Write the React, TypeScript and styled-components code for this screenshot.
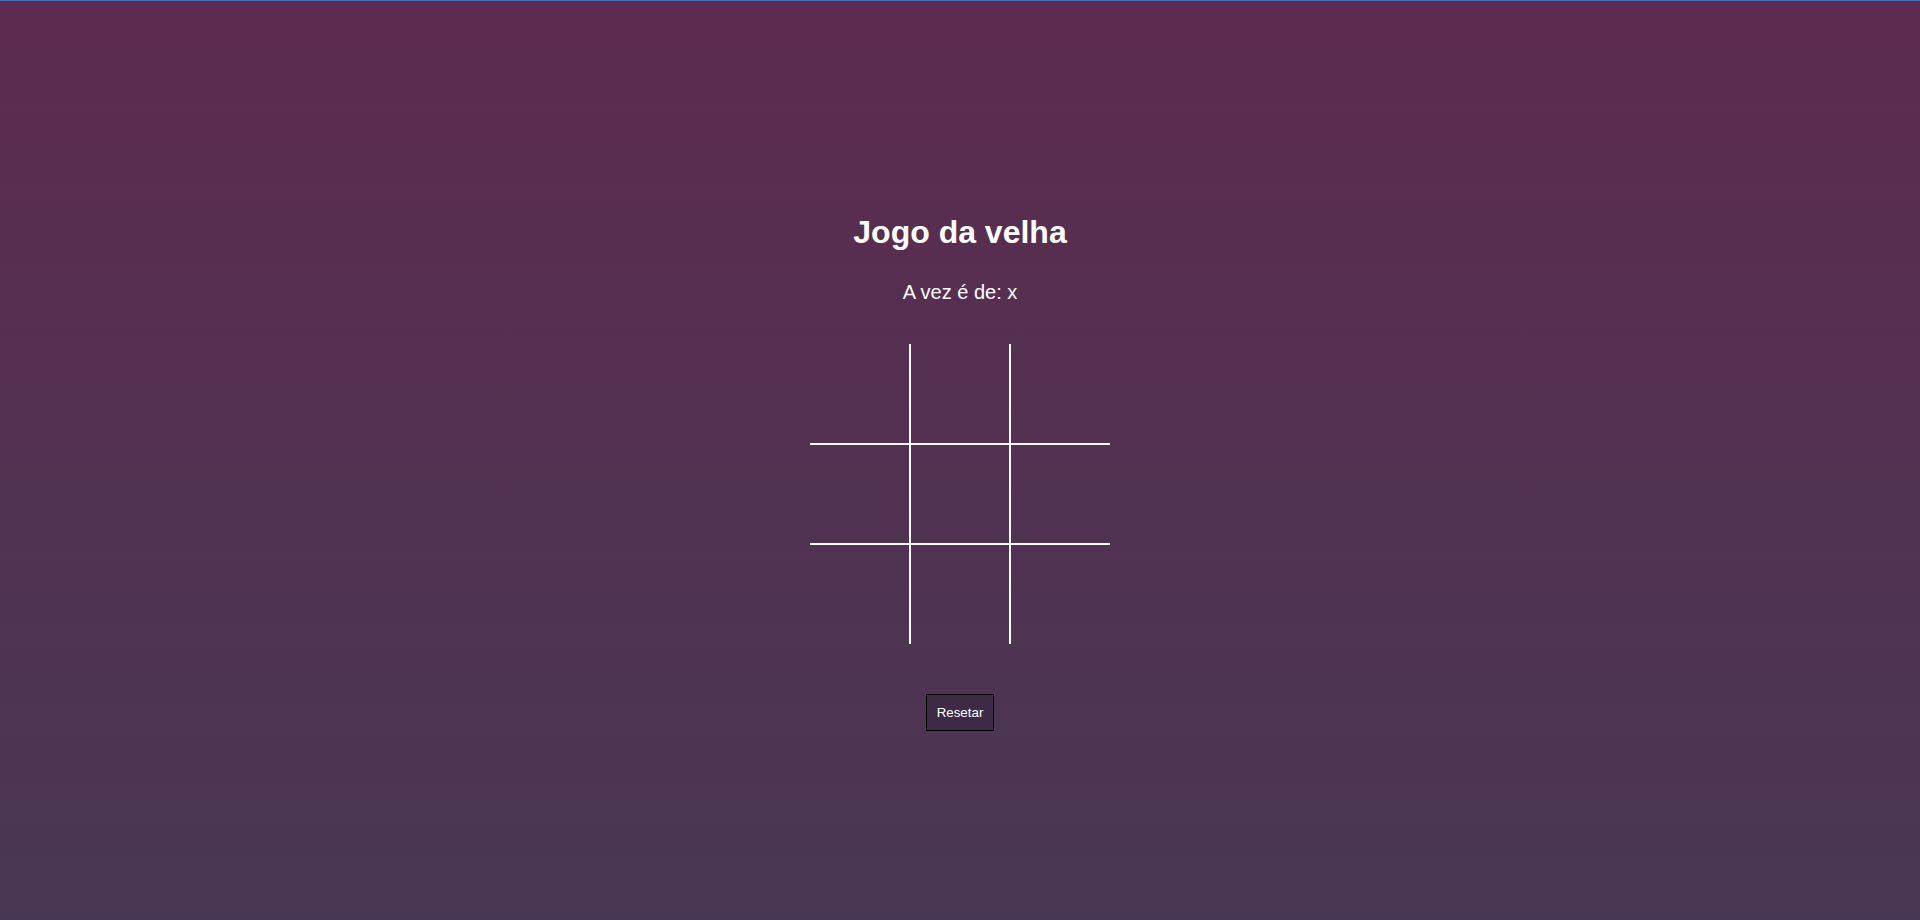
import React, { useState } from "react";
import styled, { createGlobalStyle } from "styled-components";

const GlobalStyle = createGlobalStyle`
  html, body {
    margin: 0;
    padding: 0;
    height: 100%;
  }
  body {
    font-family: "Liberation Sans", Arial, sans-serif;
    background: linear-gradient(180deg, #5d2b4f 0%, #483754 100%);
    color: #ffffff;
  }
`;

const TopLine = styled.div`
  height: 1px;
  background: #3b74b8;
`;

const Page = styled.main`
  min-height: 919px;
  box-sizing: border-box;
  display: flex;
  flex-direction: column;
  align-items: center;
  padding-top: 213px;
`;

const Title = styled.h1`
  margin: 0;
  font-size: 32px;
  font-weight: 700;
  line-height: 37px;
`;

const Turn = styled.p`
  margin: 30px 0 0;
  font-size: 20px;
  line-height: 23px;
`;

const Board = styled.div`
  margin-top: 40px;
  display: grid;
  grid-template-columns: repeat(3, 100px);
  grid-template-rows: repeat(3, 100px);
`;

const Cell = styled.button<{ $row: number; $col: number }>`
  box-sizing: border-box;
  width: 100px;
  height: 100px;
  padding: 0;
  background: transparent;
  color: #ffffff;
  font-family: "Liberation Sans", Arial, sans-serif;
  font-size: 48px;
  cursor: pointer;
  border: 0 solid #ffffff;
  border-top-width: ${(p) => (p.$row > 0 ? "1px" : "0")};
  border-bottom-width: ${(p) => (p.$row < 2 ? "1px" : "0")};
  border-left-width: ${(p) => (p.$col > 0 ? "1px" : "0")};
  border-right-width: ${(p) => (p.$col < 2 ? "1px" : "0")};
`;

const ResetButton = styled.button`
  margin-top: 50px;
  padding: 10px 10px;
  background: #3e2a45;
  color: #ffffff;
  border: 1px solid #000000;
  font-family: "Liberation Sans", Arial, sans-serif;
  font-size: 13.33px;
  line-height: 15px;
  cursor: pointer;
`;

export default function App() {
  const [cells, setCells] = useState<string[]>(Array(9).fill(""));
  const [turn, setTurn] = useState<"x" | "o">("x");

  const play = (i: number) => {
    if (cells[i]) return;
    const next = cells.slice();
    next[i] = turn;
    setCells(next);
    setTurn(turn === "x" ? "o" : "x");
  };

  const reset = () => {
    setCells(Array(9).fill(""));
    setTurn("x");
  };

  return (
    <>
      <GlobalStyle />
      <TopLine />
      <Page>
        <Title>Jogo da velha</Title>
        <Turn>A vez é de: {turn}</Turn>
        <Board>
          {cells.map((v, i) => (
            <Cell key={i} $row={Math.floor(i / 3)} $col={i % 3} onClick={() => play(i)}>
              {v}
            </Cell>
          ))}
        </Board>
        <ResetButton onClick={reset}>Resetar</ResetButton>
      </Page>
    </>
  );
}
